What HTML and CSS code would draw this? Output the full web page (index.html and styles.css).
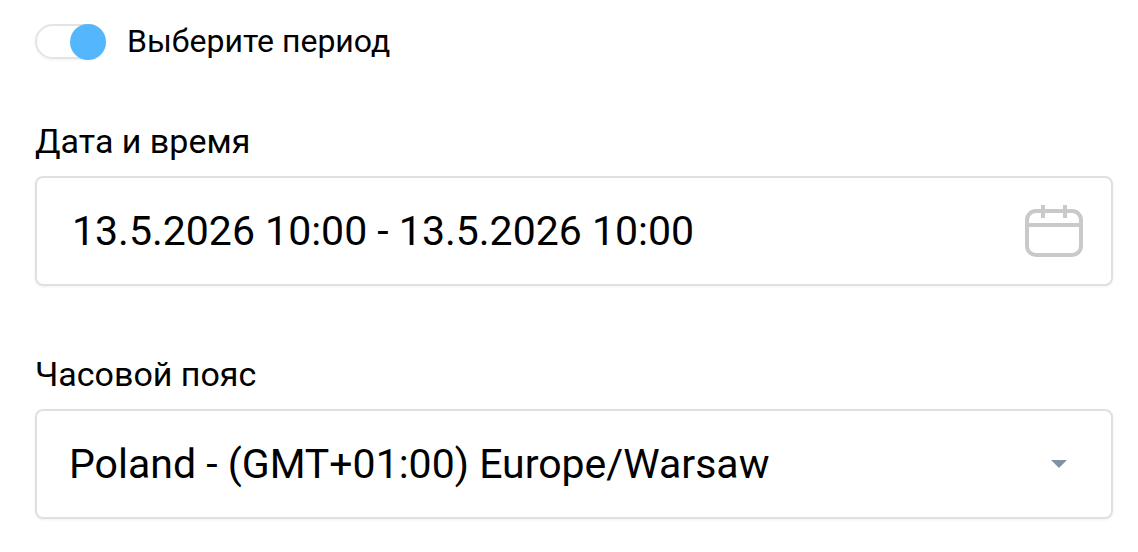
FILE: index.html
```html
<!DOCTYPE html>
<html lang="ru">
<head>
<meta charset="utf-8">
<title>Период</title>
<link rel="stylesheet" href="styles.css">
</head>
<body>
<form class="form">
  <label class="toggle">
    <input class="toggle-input" type="checkbox" role="switch" checked>
    <span class="toggle-text">Выберите период</span>
  </label>
  <div class="field">
    <label class="label" for="period">Дата и время</label>
    <div class="control">
      <input class="value" id="period" type="text" value="13.5.2026 10:00 - 13.5.2026 10:00">
      <button class="calendar" type="button" aria-label="Открыть календарь">
        <svg width="58" height="54" viewBox="0 0 58 54" fill="none" stroke="#c9c9c9" stroke-width="4">
          <rect x="2" y="7" width="54" height="44" rx="9"/>
          <path d="M2 21H56M18 1V14M40 1V14"/>
        </svg>
      </button>
    </div>
  </div>
  <div class="field">
    <label class="label" for="zone">Часовой пояс</label>
    <div class="control control-zone">
      <select class="value" id="zone"><option>Poland - (GMT+01:00) Europe/Warsaw</option></select>
      <svg class="arrow" width="16" height="8" viewBox="0 0 16 8"><path d="M0 0H16L8 8Z" fill="#8292a2"/></svg>
    </div>
  </div>
</form>
</body>
</html>
```
FILE: styles.css
```css
* { box-sizing: border-box; }
body {
  margin: 0;
  background: #fff;
  color: #000;
  font-family: Roboto, sans-serif;
}
.form {
  display: flex;
  flex-direction: column;
  padding: 21px 25px 24px 35px;
}
.toggle {
  display: flex;
  align-items: center;
  gap: 21px;
  height: 40px;
  margin-bottom: 57px;
}
.toggle-input {
  appearance: none;
  position: relative;
  width: 71px;
  height: 35px;
  margin: 0;
  border: 2px solid #e4e4e4;
  border-radius: 18px;
  box-shadow: 0 1px 3px rgba(0, 0, 0, 0.06);
}
.toggle-input::before {
  content: "";
  position: absolute;
  top: -2px;
  right: -2px;
  width: 36px;
  height: 36px;
  border-radius: 50%;
  background: #54b6fc;
}
.toggle-text { font-size: 32px; }
.field {
  display: flex;
  flex-direction: column;
  margin-bottom: 65px;
}
.field:last-child { margin-bottom: 0; }
.label {
  height: 58px;
  line-height: 46px;
  font-size: 34px;
}
.control {
  display: flex;
  align-items: center;
  height: 110px;
  padding: 0 28px 0 35px;
  border: 2px solid #e0e0e0;
  border-radius: 8px;
  box-shadow: 0 1px 3px rgba(0, 0, 0, 0.06);
}
.control-zone { padding: 0 44px 0 32px; }
.value {
  flex: 1;
  min-width: 0;
  padding: 0;
  border: 0;
  outline: 0;
  appearance: none;
  background: transparent;
  color: inherit;
  font: 41px/48px Roboto, sans-serif;
}
.calendar {
  display: flex;
  padding: 0;
  border: 0;
  background: none;
}
.arrow { pointer-events: none; }
```
